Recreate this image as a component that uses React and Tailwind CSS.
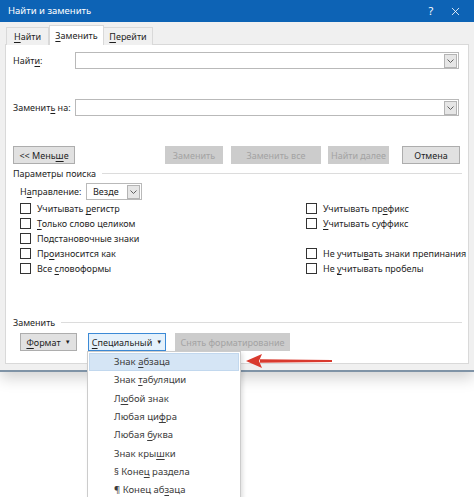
import { X } from 'lucide-react';

const font = { fontFamily: '"Noto Sans", "Open Sans", sans-serif' };

// text with one underlined access-key letter
const Key = ({ text, at }) => {
    if (at == null || at < 0) return <span className="whitespace-pre">{text}</span>;
    return (
        <span className="whitespace-pre">
            {text.slice(0, at)}
            <span className="underline underline-offset-2">{text[at]}</span>
            {text.slice(at + 1)}
        </span>
    );
};

const Chevron = () => (
    <svg width="7" height="4" viewBox="0 0 7 4" fill="none">
        <path d="M0.5 0.5l3 3 3-3" stroke="#606060" strokeWidth="1" />
    </svg>
);

const DropBtn = () => (
    <div className="w-[13px] h-[14px] my-auto mr-px flex items-center justify-center bg-[#e6e6e6] border border-[#b4b4b4]">
        <Chevron />
    </div>
);

const Combo = ({ value = '', className = '' }) => (
    <div className={`h-[17px] flex bg-white border border-[#b9b9b9] ${className}`}>
        <div className="flex-1 pl-[6px] text-[9px] leading-[15px] text-[#222]">{value}</div>
        <DropBtn />
    </div>
);

const Btn = ({ children, w, kind = 'normal' }) => {
    const styles = {
        normal: 'bg-[#e1e1e1] border-[#adadad] text-[#1e1e1e]',
        disabled: 'bg-[#cccccc] border-[#cccccc] text-[#a3a3a3]',
        focus: 'bg-[#e5f1fb] border-[#3c8ad6] text-[#1e1e1e]',
    };
    return (
        <div
            className={`h-[18px] shrink-0 flex items-center justify-center border whitespace-nowrap text-[9px] leading-none ${styles[kind]}`}
            style={{ width: w }}
        >
            {children}
        </div>
    );
};

const Caret = () => <span className="ml-[4px] text-[6px] leading-none">▼</span>;

const Check = ({ text, at }) => (
    <div className="h-[15px] flex items-center gap-[6px] text-[9px] text-[#1e1e1e]">
        <div className="w-[11px] h-[11px] border border-[#333] bg-white shrink-0" />
        <Key text={text} at={at} />
    </div>
);

const Group = ({ title }) => (
    <div className="flex items-center gap-[6px] pr-[6px] h-[13px] text-[9px] text-[#1e1e1e]">
        <span className="whitespace-nowrap">{title}</span>
        <div className="flex-1 h-px bg-[#dcdcdc]" />
    </div>
);

const menuItems = [
    { text: 'Знак абзаца', at: 5, active: true },
    { text: 'Знак табуляции', at: 5 },
    { text: 'Любой знак', at: 1 },
    { text: 'Любая цифра', at: 8 },
    { text: 'Любая буква', at: 6 },
    { text: 'Знак крышки', at: 8 },
    { text: '§ Конец раздела', at: 6 },
    { text: '¶ Конец абзаца', at: 10 },
];

export default function App() {
    return (
        <div className="relative w-[474px] h-[497px] overflow-hidden bg-white" style={font}>
            {/* dialog */}
            <div className="bg-[#f0f0f0] border-b-2 border-[#7f93a6] shadow-[0_6px_14px_rgba(0,0,0,0.18)]">
                <div className="h-[22px] bg-[#0d63b5] flex items-center pl-[8px] text-white text-[9.5px]">
                    <span className="flex-1">Найти и заменить</span>
                    <span className="w-[36px] text-center text-[11px]">?</span>
                    <X className="w-[13px] h-[13px] mr-[12px]" strokeWidth={1.5} />
                </div>

                <div className="pt-[3px] px-[5px] pb-[6px]">
                    {/* tabs */}
                    <div className="flex items-end h-[20px] text-[9px] text-[#1e1e1e] -mb-px relative z-10">
                        <div className="w-[43px] h-[18px] ml-px flex items-center justify-center border border-[#d9d9d9] border-b-0 bg-[#f0f0f0]">
                            <Key text="Найти" at={0} />
                        </div>
                        <div className="w-[55px] h-[20px] flex items-center justify-center border border-[#d9d9d9] border-b-0 bg-white">
                            <Key text="Заменить" at={0} />
                        </div>
                        <div className="w-[49px] h-[18px] flex items-center justify-center border border-[#d9d9d9] border-b-0 border-l-0 bg-[#f0f0f0]">
                            <Key text="Перейти" at={0} />
                        </div>
                    </div>

                    {/* panel */}
                    <div className="bg-white border border-[#d9d9d9] pl-[7px] pb-[12px] pt-[7px]">
                        <div className="flex items-center">
                            <span className="w-[62px] text-[9px] text-[#1e1e1e]"><Key text="Найти:" at={4} /></span>
                            <Combo className="w-[384px]" />
                        </div>
                        <div className="flex items-center mt-[30px]">
                            <span className="w-[62px] text-[9px] text-[#1e1e1e]"><Key text="Заменить на:" at={7} /></span>
                            <Combo className="w-[384px]" />
                        </div>

                        <div className="flex mt-[30px]">
                            <Btn w={62}><Key text="<< Меньше" at={7} /></Btn>
                            <div className="w-[90px]" />
                            <Btn w={58} kind="disabled">Заменить</Btn>
                            <div className="w-[8px]" />
                            <Btn w={90} kind="disabled">Заменить все</Btn>
                            <div className="w-[7px]" />
                            <Btn w={61} kind="disabled">Найти далее</Btn>
                            <div className="w-[13px]" />
                            <Btn w={58}>Отмена</Btn>
                        </div>

                        <div className="mt-[3px]">
                            <Group title="Параметры поиска" />
                        </div>

                        <div className="pl-[7px]">
                            <div className="flex items-center mt-[3px] text-[9px] text-[#1e1e1e]">
                                <span className="w-[66px]"><Key text="Направление:" at={1} /></span>
                                <Combo value="Везде" className="w-[56px]" />
                            </div>

                            <div className="grid grid-cols-[286px_1fr] mt-[1px]">
                                <div>
                                    <Check text="Учитывать регистр" at={10} />
                                    <Check text="Только слово целиком" at={0} />
                                    <Check text="Подстановочные знаки" />
                                    <Check text="Произносится как" at={2} />
                                    <Check text="Все словоформы" at={4} />
                                </div>
                                <div>
                                    <Check text="Учитывать префикс" at={12} />
                                    <Check text="Учитывать суффикс" at={0} />
                                    <div className="h-[15px]" />
                                    <Check text="Не учитывать знаки препинания" at={8} />
                                    <Check text="Не учитывать пробелы" at={3} />
                                </div>
                            </div>
                        </div>

                        <div className="mt-[40px]">
                            <Group title="Заменить" />
                        </div>

                        <div className="flex mt-[4px] pl-[7px]">
                            <Btn w={57}><Key text="Формат" at={0} /><Caret /></Btn>
                            <div className="w-[11px]" />
                            <Btn w={78} kind="focus"><Key text="Специальный" at={0} /><Caret /></Btn>
                            <div className="w-[9px]" />
                            <Btn w={115} kind="disabled">Снять форматирование</Btn>
                        </div>
                    </div>
                </div>
            </div>

            {/* dropdown menu */}
            <div className="absolute left-[87px] top-[351px] w-[154px] h-[160px] bg-white border border-[#cccccc] p-px shadow-[2px_2px_4px_rgba(0,0,0,0.12)]">
                {menuItems.map((item) => (
                    <div
                        key={item.text}
                        className={`h-[18.3px] flex items-center pl-[24px] text-[9.5px] text-[#3c3c3c] border ${item.active ? 'bg-[#d5e5f5] border-[#c2d8ee]' : 'border-transparent'}`}
                    >
                        <Key text={item.text} at={item.at} />
                    </div>
                ))}
            </div>

            {/* red arrow */}
            <svg className="absolute left-[244px] top-[352px]" width="92" height="18" viewBox="0 0 92 18">
                <path d="M16 7.2 L88 8 L88 10 L16 10.8 Z" fill="#d93a2e" />
                <path d="M2 9 L18 2 L15 9 L18 16 Z" fill="#d93a2e" />
            </svg>
        </div>
    );
}
